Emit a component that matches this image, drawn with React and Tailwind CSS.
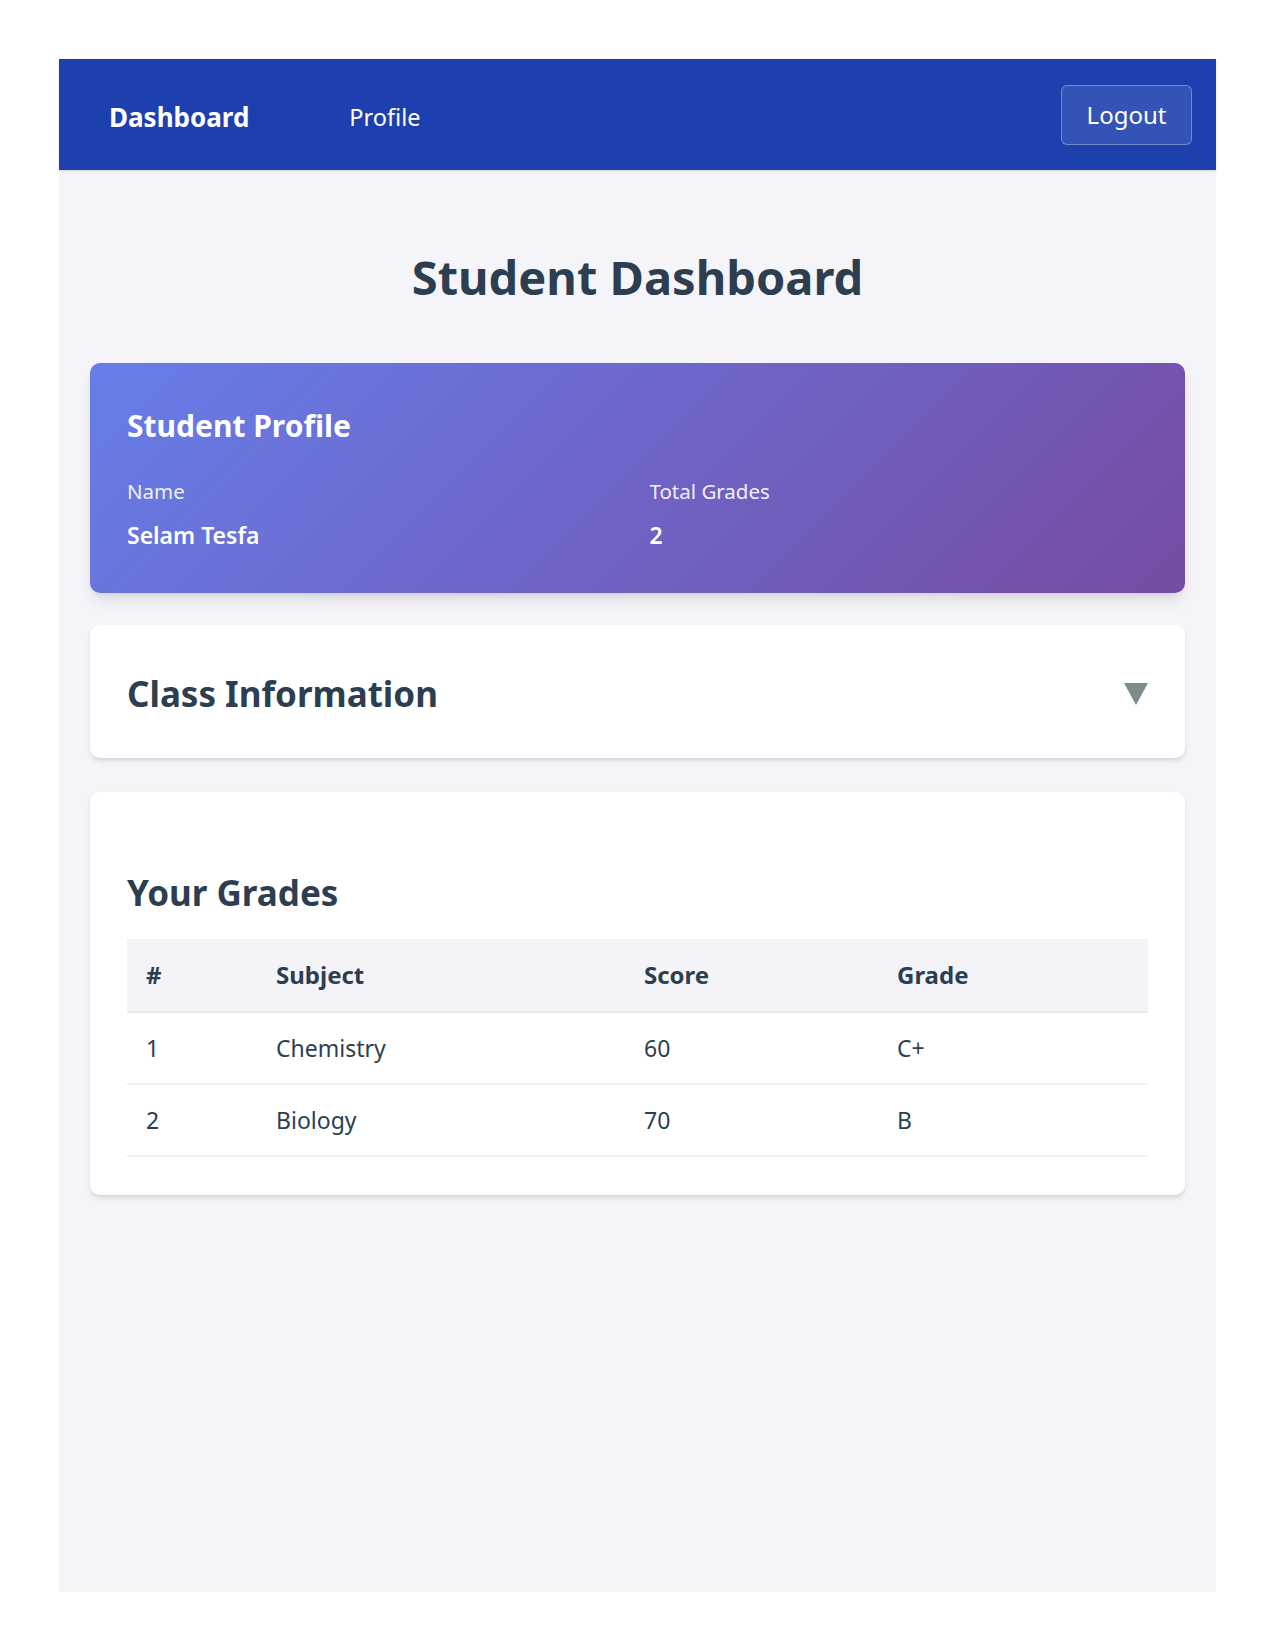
const grades = [
  { id: 1, subject: 'Chemistry', score: 60, grade: 'C+' },
  { id: 2, subject: 'Biology', score: 70, grade: 'B' },
];

export default function App() {
  return (
    <div className="min-h-screen bg-white pt-[59px] font-['Noto_Sans',sans-serif] text-[#2c3e50]">
      <div className="mx-auto w-[1157px] h-[1533px] bg-[#f5f5f9]">
        {/* top nav */}
        <nav className="flex items-center justify-between h-[111px] bg-[#1e40af] pl-[50px] pr-[24px] shadow-sm">
          <div className="flex items-center gap-[100px] pt-[6px]">
            <span className="text-white font-bold text-[26px]">Dashboard</span>
            <span className="text-white text-[23.5px]">Profile</span>
          </div>
          <button className="h-[60px] w-[131px] rounded-md border border-white/30 bg-white/10 text-white text-[24px]">
            Logout
          </button>
        </nav>

        <main className="px-[31px]">
          <h1 className="text-center font-bold text-[47px] pt-[78px] pb-[56px] leading-tight">Student Dashboard</h1>

          {/* profile card */}
          <div className="rounded-[10px] bg-[linear-gradient(135deg,#667eea_0%,#764ba2_100%)] px-[37px] pt-[44px] pb-[40px] text-white shadow-lg">
            <h2 className="text-[30px] font-bold leading-tight">Student Profile</h2>
            <div className="grid grid-cols-2 gap-6 mt-[32px]">
              <div>
                <div className="text-[20.5px] opacity-90">Name</div>
                <div className="text-[23px] font-semibold mt-[11px]">Selam Tesfa</div>
              </div>
              <div>
                <div className="text-[20.5px] opacity-90">Total Grades</div>
                <div className="text-[23px] font-semibold mt-[11px]">2</div>
              </div>
            </div>
          </div>

          {/* class info */}
          <div className="mt-[32px] h-[133px] rounded-[10px] bg-white shadow-md flex items-center justify-between px-[37px] pt-[7px]">
            <h2 className="text-[35px] font-bold">Class Information</h2>
            <svg width="24" height="22" viewBox="0 0 24 22" className="mb-[2px]">
              <path d="M0 0 H24 L12 22 Z" fill="#7f8c8d" />
            </svg>
          </div>

          {/* grades */}
          <div className="mt-[34px] rounded-[10px] bg-white shadow-md px-[37px] pt-[79px] pb-[38px]">
            <h2 className="text-[35px] font-bold leading-tight">Your Grades</h2>
            <table className="w-full mt-[25px] border-collapse text-[23px] text-left">
              <thead className="bg-[#f4f4f8]">
                <tr className="border-b-2 border-[#ececf0]">
                  <th className="w-[130px] h-[73px] pl-[19px] text-[24px] font-bold">#</th>
                  <th className="w-[368px] pl-[19px] text-[24px] font-bold">Subject</th>
                  <th className="w-[253px] pl-[19px] text-[24px] font-bold">Score</th>
                  <th className="pl-[19px] text-[24px] font-bold">Grade</th>
                </tr>
              </thead>
              <tbody>
                {grades.map(g => (
                  <tr key={g.id} className="border-b-2 border-[#f0f0f3]">
                    <td className="h-[72px] pl-[19px]">{g.id}</td>
                    <td className="pl-[19px]">{g.subject}</td>
                    <td className="pl-[19px]">{g.score}</td>
                    <td className="pl-[19px]">{g.grade}</td>
                  </tr>
                ))}
              </tbody>
            </table>
          </div>
        </main>
      </div>
    </div>
  );
}
